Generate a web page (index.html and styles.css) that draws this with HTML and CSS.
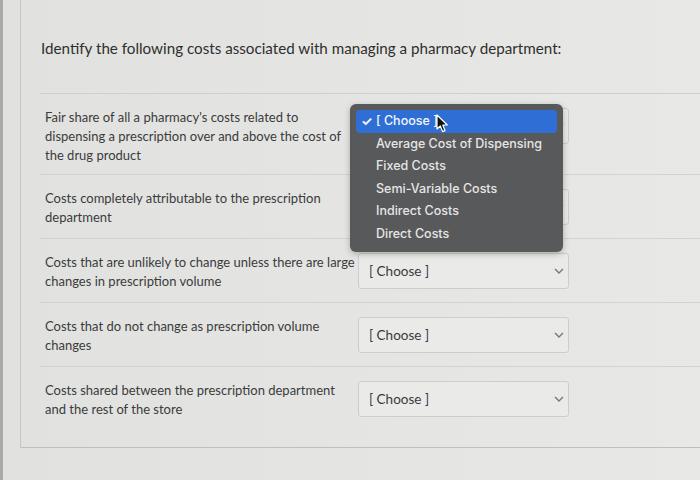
FILE: index.html
```html
<!DOCTYPE html>
<html>
<head>
<meta charset="utf-8">
<link rel="stylesheet" href="styles.css">
</head>
<body>
<div class="screen">
  <div class="page">
    <div class="content">
      <div class="title">Identify the following costs associated with managing a pharmacy department:</div>
      <div class="row">
        <div class="prompt">Fair share of all a pharmacy's costs related to dispensing a prescription over and above the cost of the drug product</div>
        <div class="select">
          <span class="value">[ Choose ]</span>
          <svg class="chev" width="10" height="6" viewBox="0 0 10 6"><path d="M1 1 L5 5 L9 1" fill="none" stroke="#777" stroke-width="1.4"/></svg>
          <div class="menu">
            <div class="item selected"><span class="check">✓</span>[ Choose ]</div>
            <div class="item">Average Cost of Dispensing</div>
            <div class="item">Fixed Costs</div>
            <div class="item">Semi-Variable Costs</div>
            <div class="item">Indirect Costs</div>
            <div class="item">Direct Costs</div>
            <svg class="cursor" width="13" height="19" viewBox="0 0 13 19"><path d="M1 1 L1 15 L4.3 12 L6.6 17.6 L9 16.6 L6.8 11.2 L11.3 11 Z" fill="#111" stroke="#fff" stroke-width="1.2" stroke-linejoin="round"/></svg>
          </div>
        </div>
      </div>
      <div class="row">
        <div class="prompt">Costs completely attributable to the prescription department</div>
        <div class="select">
          <span class="value">[ Choose ]</span>
          <svg class="chev" width="10" height="6" viewBox="0 0 10 6"><path d="M1 1 L5 5 L9 1" fill="none" stroke="#777" stroke-width="1.4"/></svg>
        </div>
      </div>
      <div class="row">
        <div class="prompt">Costs that are unlikely to change unless there are large changes in prescription volume</div>
        <div class="select">
          <span class="value">[ Choose ]</span>
          <svg class="chev" width="10" height="6" viewBox="0 0 10 6"><path d="M1 1 L5 5 L9 1" fill="none" stroke="#777" stroke-width="1.4"/></svg>
        </div>
      </div>
      <div class="row">
        <div class="prompt">Costs that do not change as prescription volume changes</div>
        <div class="select">
          <span class="value">[ Choose ]</span>
          <svg class="chev" width="10" height="6" viewBox="0 0 10 6"><path d="M1 1 L5 5 L9 1" fill="none" stroke="#777" stroke-width="1.4"/></svg>
        </div>
      </div>
      <div class="row last">
        <div class="prompt">Costs shared between the prescription department and the rest of the store</div>
        <div class="select">
          <span class="value">[ Choose ]</span>
          <svg class="chev" width="10" height="6" viewBox="0 0 10 6"><path d="M1 1 L5 5 L9 1" fill="none" stroke="#777" stroke-width="1.4"/></svg>
        </div>
      </div>
    </div>
  </div>
</div>
</body>
</html>
```

FILE: styles.css
```css
html, body {
  margin: 0;
  padding: 0;
}
body {
  width: 700px;
  height: 480px;
  overflow: hidden;
  background: linear-gradient(90deg, #e1e2e0 0%, #e5e6e4 60%, #e8e9e7 100%);
  font-family: Lato, "Open Sans", sans-serif;
  color: #3a3a3a;
}
.screen {
  height: 480px;
  border-left: 3px solid #a8a9aa;
  box-sizing: border-box;
}
.page {
  margin-left: 17px;
  height: 448px;
  border-left: 1px solid #c6c7c5;
  border-bottom: 1px solid #bfc0be;
  box-sizing: border-box;
}
.content {
  margin-left: 19px;
}
.title {
  font-size: 15.2px;
  line-height: 22px;
  padding: 37px 0 34px 1px;
  border-bottom: 1px solid #cfd0ce;
  color: #2e2e2e;
}
.row {
  display: flex;
  align-items: flex-start;
  padding: 14px 0 9px 5px;
  border-bottom: 1px solid #d2d3d1;
  min-height: 40px;
}
.row.last {
  border-bottom: none;
}
.prompt {
  width: 311px;
  font-size: 13px;
  line-height: 19px;
  color: #3b3b3b;
}
.select {
  position: relative;
  margin-left: 2px;
  width: 211px;
  height: 36px;
  box-sizing: border-box;
  border: 1px solid #cdcecc;
  border-radius: 3px;
  background: #eaebe9;
  display: flex;
  align-items: center;
  justify-content: space-between;
  padding: 0 4px 0 10px;
}
.value {
  font-size: 13.5px;
  color: #3a3a3a;
}
.chev {
  display: block;
}
.menu {
  position: absolute;
  left: -9px;
  top: -5px;
  width: 213px;
  height: 148px;
  box-sizing: border-box;
  padding: 6px 6px;
  background: #58595b;
  border-radius: 6px;
  box-shadow: 0 2px 6px rgba(0,0,0,0.25);
  font-family: Inter, "Open Sans", sans-serif;
  font-size: 12.5px;
  font-weight: 500;
  color: #e6e6e6;
  z-index: 2;
}
.item {
  height: 22.6px;
  line-height: 22.6px;
  padding-left: 20px;
  position: relative;
  white-space: nowrap;
}
.item.selected {
  background: #2f6fd5;
  border-radius: 4px;
  color: #f4f6fb;
}
.check {
  position: absolute;
  left: 5px;
  top: 0;
  font-size: 13px;
  font-weight: 700;
}
.cursor {
  position: absolute;
  left: 86px;
  top: 10px;
}
```
